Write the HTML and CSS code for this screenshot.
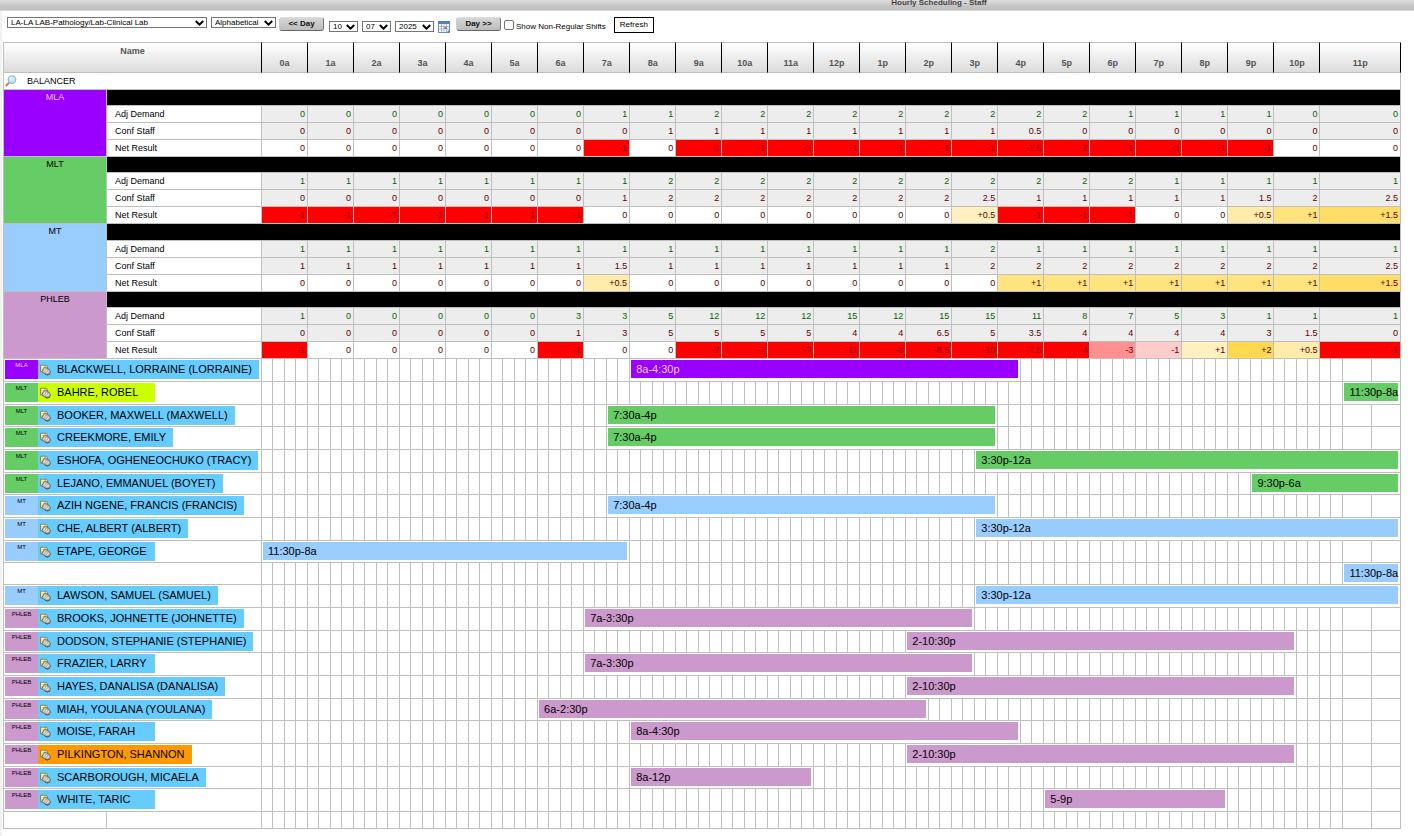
FILE: index.html
```html
<!DOCTYPE html>
<html lang="en">
<head>
<meta charset="utf-8">
<title>Hourly Scheduling - Staff</title>
<link rel="stylesheet" href="styles.css">
</head>
<body>
<svg class="sprite" aria-hidden="true">
  <symbol id="chevron" viewBox="0 0 9 6"><path d="M.8 1 4.500 4.600 8.200 1" fill="none" stroke="#000" stroke-width="2"/></symbol>
  <symbol id="staff-note" viewBox="0 0 12 12">
    <path d="M.6 .8h6.400l1.200 1.600v5.600h-7.600z" fill="#e6dc86" stroke="#77755c" stroke-width=".9"/>
    <path d="M1.500 2h3M1.500 4h1.500" stroke="#fffbd0" stroke-width="1"/>
    <path d="M1.800 8.200 4.600 3.200 6.400 3 8.200 4.600 9.600 4.800 11.600 8.200 10.200 10.600 7.600 11.200 4.800 9.800z" fill="#b9b5aa" stroke="#66635b" stroke-width=".9"/>
    <path d="M3.600 7.800 5.600 4.600M5.800 8.600 7.600 5.800M8 9.400 9.600 6.800" stroke="#efece3" stroke-width="1"/>
    <path d="M5 10.400 8 11.600 11 10.200" fill="none" stroke="#4d4a44" stroke-width=".8"/>
  </symbol>
</svg>

<header class="titlebar"><h1>Hourly Scheduling - Staff</h1></header>

<main class="page">
  <form class="toolbar" onsubmit="return false">
    <span class="pick pick-unit"><select aria-label="Unit"><option>LA-LA LAB-Pathology/Lab-Clinical Lab</option></select><svg><use href="#chevron"/></svg></span>
    <span class="pick pick-sort"><select aria-label="Sort order"><option>Alphabetical</option></select><svg><use href="#chevron"/></svg></span>
    <button class="day-button" type="button">&lt;&lt; Day</button>
    <span class="date">
      <span class="pick pick-part"><select aria-label="Month"><option>10</option></select><svg><use href="#chevron"/></svg></span>
      <span class="pick pick-part"><select aria-label="Day"><option>07</option></select><svg><use href="#chevron"/></svg></span>
      <span class="pick pick-year"><select aria-label="Year"><option>2025</option></select><svg><use href="#chevron"/></svg></span>
      <button class="calendar" type="button" aria-label="Open calendar">
        <svg viewBox="0 0 12 12"><rect x=".5" y=".5" width="11" height="11" fill="#fff" stroke="#6b8fc4"/><rect x="0" y="0" width="12" height="3" fill="#5580c0"/><path d="M1 5.500h10M1 8h10M3.500 3v8M6 3v8M8.500 3v8" stroke="#8fa9cf" stroke-width=".8"/><rect x="6.500" y="6" width="2" height="2" fill="#e0552d"/><path d="M12 8v4H8z" fill="#5f86c2"/></svg>
      </button>
    </span>
    <button class="day-button day-next" type="button">Day &gt;&gt;</button>
    <label class="non-regular"><input type="checkbox"><span>Show Non-Regular Shifts</span></label>
    <button class="refresh" type="button">Refresh</button>
  </form>

  <table class="schedule" id="schedule">
    <thead></thead>
    <tbody class="balancer">
      <tr><th colspan="98" scope="row">
        <span class="balancer-title">
          <svg viewBox="0 0 12 12"><path d="M.8 11.200 4 7.600" stroke="#c9764a" stroke-width="1.800"/><circle cx="7" cy="4.600" r="3.800" fill="#c9e8f8" stroke="#86b4d2" stroke-width="1.100"/><path d="M5 4a2.200 2.200 0 0 1 2-1.600" fill="none" stroke="#fff"/></svg>
          BALANCER
        </span>
      </th></tr>
    </tbody>
  </table>
</main>
<script src="schedule.js"></script>
</body>
</html>
```
FILE: styles.css
```css
* { box-sizing: border-box; }

body {
  margin: 0;
  background: #fff;
  color: #000;
  font: 9px/12px "Liberation Sans", Arial, sans-serif;
}

.sprite { display: none; }

.titlebar {
  height: 11px;
  padding-left: 464px;
  background: linear-gradient(#dedede, #c4c4c4 60%, #c0c0c0);
  border-bottom: 1px solid #d8d8d8;
  text-align: center;
}

.titlebar h1 {
  margin: 0;
  color: #444;
  font-size: 8px;
  line-height: 5px;
}

.page {
  padding: 0 13px 7px 1px;
  border-left: 2px solid #f2f2f2;
}

/* Toolbar */
.toolbar {
  display: flex;
  align-items: flex-start;
  padding: 6px 0 9px 4px;
  font-size: 8px;
}

.pick {
  display: grid;
  align-items: center;
  margin-right: 4px;
}

.pick > * { grid-area: 1 / 1; }

.pick select {
  appearance: none;
  width: 100%;
  height: 11px;
  margin: 0;
  padding: 0 0 0 3px;
  border: 1px solid #767676;
  border-radius: 0;
  background: #fff;
  color: #000;
  font: inherit;
  line-height: 9px;
}

.pick svg {
  justify-self: end;
  width: 9px;
  height: 6px;
  margin-right: 3px;
  pointer-events: none;
}

.pick-unit { width: 200px; }
.pick-sort { width: 65px; margin-right: 3px; }
.pick-part { width: 29px; }
.pick-year { width: 39px; }

.day-button {
  width: 45px;
  height: 14px;
  padding: 0;
  border: 1px solid;
  border-color: #ddd #777 #666 #ccc;
  border-radius: 3px;
  background: linear-gradient(#d6d6d6, #bdbdbd);
  color: #111;
  font: bold 8px/10px "Liberation Sans", Arial, sans-serif;
}

.date {
  display: flex;
  align-self: flex-end;
  align-items: flex-start;
  margin-left: 5px;
}

.calendar {
  width: 12px;
  height: 12px;
  padding: 0;
  border: 0;
  background: none;
}

.calendar svg { display: block; }
.day-next { margin-left: 6px; }

.non-regular {
  display: flex;
  align-items: center;
  align-self: flex-end;
  gap: 2px;
  margin: 0 8px 0 3px;
}

.non-regular input {
  appearance: none;
  width: 10px;
  height: 10px;
  margin: 0 0 3px;
  border: 1px solid #767676;
  border-radius: 2px;
  background: #fff;
}

.refresh {
  width: 40px;
  height: 16px;
  padding: 0;
  border: 1px solid #000;
  background: #fff;
  color: #000;
  font: inherit;
}

/* Schedule grid */
.schedule {
  width: 100%;
  table-layout: fixed;
  border-collapse: separate;
  border-spacing: 0;
  border-left: 1px solid #bfbfbf;
}

.col-type { width: 103px; }
.col-label { width: 155px; }
.col-odd { width: 11px; }
.col-even { width: 12px; }

.schedule td,
.schedule th {
  padding: 0;
  border: 0 solid #bfbfbf;
  border-width: 0 1px 1px 0;
  font-weight: normal;
}

.schedule thead th {
  height: 31px;
  padding-bottom: 3px;
  border-top-width: 1px;
  border-right-color: #000;
  background: linear-gradient(#fff, #dcdcdc);
  color: #555;
  font-weight: bold;
  vertical-align: bottom;
}

.schedule thead .name-head {
  padding-top: 2px;
  vertical-align: top;
}

.balancer th {
  height: 17px;
  text-align: left;
}

.balancer-title {
  display: flex;
  align-items: center;
  gap: 10px;
  padding-left: 1px;
  line-height: 10px;
}

.balancer-title svg {
  width: 12px;
  height: 12px;
}

.group tr { height: 17px; }
.group tr:first-child { height: 16px; }
.group:nth-child(3n) tr:first-child { height: 17px; }

.group .group-name {
  padding-top: 1px;
  vertical-align: top;
  text-align: center;
}

.schedule .group-bar { background: #000; }

.group .measure {
  padding-left: 8px;
  text-align: left;
}

.schedule .value {
  padding-right: 2px;
  text-align: right;
}

.demand .value { background: #ededed; color: #006400; }
.confirmed .value { background: #ededed; color: #5a0000; }
.net .value { color: #5a0000; }

.net .short-3 { background: #f00; color: #900000; }
.net .short-2 { background: #ff9090; }
.net .short-1 { background: #fcc; }
.net .over-1 { background: #fff0c0; }
.net .over-2 { background: #ffebaa; }
.net .over-3 { background: #ffe37f; }
.net .over-4 { background: #ffdd66; }
.net .over-5 { background: #ffd950; }

.mla { background: #90f; color: #e8ccff; }
.mlt { background: #6c6; }
.mt { background: #9cf; }
.phleb { background: #c9c; }

/* One tbody per employee */
.staff tr { height: 23px; }
.staff:nth-child(3n + 1) tr,
.staff .continued { height: 22px; }

.schedule .employee,
.schedule .shift {
  padding: 1px 2px 0 1px;
  vertical-align: top;
}

.badge {
  display: flex;
  height: 19px;
}

.type {
  flex: 0 0 33px;
  font-size: 6px;
  line-height: 11px;
  text-align: center;
}

.person {
  display: flex;
  align-items: center;
  gap: 6px;
  min-width: 117px;
  padding: 0 7px 0 2px;
  background: #6cf;
  font-size: 11px;
  line-height: 19px;
  text-align: left;
  white-space: nowrap;
}

.person.lime { background: #cf0; }
.person.orange { background: #f90; }

.person svg {
  flex: none;
  width: 11px;
  height: 12px;
}

.bar {
  height: 18px;
  padding-left: 5px;
  font-size: 11px;
  line-height: 18px;
  white-space: nowrap;
}

.footer-row tr { height: 17px; }
```
FILE: schedule.js
```js
const HOURS = ["0a","1a","2a","3a","4a","5a","6a","7a","8a","9a","10a","11a",
  "12p","1p","2p","3p","4p","5p","6p","7p","8p","9p","10p","11p"];

const GROUPS = [
  { name: "MLA",
    demand: [0,0,0,0,0,0,0,1,1,2,2,2,2,2,2,2,2,2,1,1,1,1,0,0],
    staff:  [0,0,0,0,0,0,0,0,1,1,1,1,1,1,1,1,0.5,0,0,0,0,0,0,0] },
  { name: "MLT",
    demand: [1,1,1,1,1,1,1,1,2,2,2,2,2,2,2,2,2,2,2,1,1,1,1,1],
    staff:  [0,0,0,0,0,0,0,1,2,2,2,2,2,2,2,2.5,1,1,1,1,1,1.5,2,2.5] },
  { name: "MT",
    demand: [1,1,1,1,1,1,1,1,1,1,1,1,1,1,1,2,1,1,1,1,1,1,1,1],
    staff:  [1,1,1,1,1,1,1,1.5,1,1,1,1,1,1,1,2,2,2,2,2,2,2,2,2.5] },
  { name: "PHLEB",
    demand: [1,0,0,0,0,0,3,3,5,12,12,12,15,12,15,15,11,8,7,5,3,1,1,1],
    staff:  [0,0,0,0,0,0,1,3,5,5,5,5,4,4,6.5,5,3.5,4,4,4,4,3,1.5,0] }
];

// Each shift is [label, start hour, end hour]; a second shift takes a row of its own.
const STAFF = [
  ["MLA", "BLACKWELL, LORRAINE (LORRAINE)", [["8a-4:30p", 8, 16.5]]],
  ["MLT", "BAHRE, ROBEL", [["11:30p-8a", 23.5, 24]], "lime"],
  ["MLT", "BOOKER, MAXWELL (MAXWELL)", [["7:30a-4p", 7.5, 16]]],
  ["MLT", "CREEKMORE, EMILY", [["7:30a-4p", 7.5, 16]]],
  ["MLT", "ESHOFA, OGHENEOCHUKO (TRACY)", [["3:30p-12a", 15.5, 24]]],
  ["MLT", "LEJANO, EMMANUEL (BOYET)", [["9:30p-6a", 21.5, 24]]],
  ["MT", "AZIH NGENE, FRANCIS (FRANCIS)", [["7:30a-4p", 7.5, 16]]],
  ["MT", "CHE, ALBERT (ALBERT)", [["3:30p-12a", 15.5, 24]]],
  ["MT", "ETAPE, GEORGE", [["11:30p-8a", 0, 8], ["11:30p-8a", 23.5, 24]]],
  ["MT", "LAWSON, SAMUEL (SAMUEL)", [["3:30p-12a", 15.5, 24]]],
  ["PHLEB", "BROOKS, JOHNETTE (JOHNETTE)", [["7a-3:30p", 7, 15.5]]],
  ["PHLEB", "DODSON, STEPHANIE (STEPHANIE)", [["2-10:30p", 14, 22.5]]],
  ["PHLEB", "FRAZIER, LARRY", [["7a-3:30p", 7, 15.5]]],
  ["PHLEB", "HAYES, DANALISA (DANALISA)", [["2-10:30p", 14, 22.5]]],
  ["PHLEB", "MIAH, YOULANA (YOULANA)", [["6a-2:30p", 6, 14.5]]],
  ["PHLEB", "MOISE, FARAH", [["8a-4:30p", 8, 16.5]]],
  ["PHLEB", "PILKINGTON, SHANNON", [["2-10:30p", 14, 22.5]], "orange"],
  ["PHLEB", "SCARBOROUGH, MICAELA", [["8a-12p", 8, 12]]],
  ["PHLEB", "WHITE, TARIC", [["5-9p", 17, 21]]]
];

const table = document.getElementById("schedule");

// Quarter-hour columns; the last two take up the remaining width.
const quarters = Array.from({ length: 96 }, (_, i) =>
  i > 93 ? "<col>" : `<col class="${i % 2 ? "col-even" : "col-odd"}">`).join("");
table.insertAdjacentHTML("afterbegin",
  `<colgroup><col class="col-type"><col class="col-label">${quarters}</colgroup>`);

table.tHead.innerHTML = `<tr><th class="name-head" colspan="2" scope="col">Name</th>${
  HOURS.map(h => `<th colspan="4" scope="col">${h}</th>`).join("")}</tr>`;

function level(net, demand) {
  if (net === 0) return "";
  const ratio = net / (demand || 1);
  if (ratio <= -0.5) return "short-3";
  if (ratio <= -0.3) return "short-2";
  if (ratio < 0) return "short-1";
  if (ratio < 0.4) return "over-1";
  if (ratio < 0.8) return "over-2";
  if (ratio < 1.2) return "over-3";
  return ratio < 1.8 ? "over-4" : "over-5";
}

function cells(values, classes = []) {
  return values.map((v, i) => `<td class="value ${classes[i] || ""}" colspan="4">${v}</td>`).join("");
}

function groupBody(g) {
  const net = g.staff.map((s, i) => s - g.demand[i]);
  return `<tbody class="group">
    <tr><th class="group-name ${g.name.toLowerCase()}" rowspan="4" scope="rowgroup">${g.name}</th><td class="group-bar" colspan="97"></td></tr>
    <tr class="demand"><th class="measure" scope="row">Adj Demand</th>${cells(g.demand)}</tr>
    <tr class="confirmed"><th class="measure" scope="row">Conf Staff</th>${cells(g.staff)}</tr>
    <tr class="net"><th class="measure" scope="row">Net Result</th>${
      cells(net.map(n => n > 0 ? "+" + n : n), net.map((n, i) => level(n, g.demand[i])))}</tr>
  </tbody>`;
}

function timeline(type, [label, start, end]) {
  return "<td></td>".repeat(start * 4) +
    `<td class="shift" colspan="${(end - start) * 4}"><div class="bar ${type}">${label}</div></td>` +
    "<td></td>".repeat((24 - end) * 4);
}

function staffBody([type, name, shifts, tint = ""]) {
  const css = type.toLowerCase();
  return `<tbody class="staff">${shifts.map((shift, i) => i
    ? `<tr class="continued"><td colspan="2"></td>${timeline(css, shift)}</tr>`
    : `<tr><th class="employee" colspan="2" scope="row"><div class="badge"><span class="type ${css}">${type}</span><span class="person ${tint}"><svg><use href="#staff-note"/></svg>${name}</span></div></th>${timeline(css, shift)}</tr>`
  ).join("")}</tbody>`;
}

table.insertAdjacentHTML("beforeend",
  GROUPS.map(groupBody).join("") + STAFF.map(staffBody).join("") +
  `<tbody class="footer-row"><tr>${"<td></td>".repeat(98)}</tr></tbody>`);
```
